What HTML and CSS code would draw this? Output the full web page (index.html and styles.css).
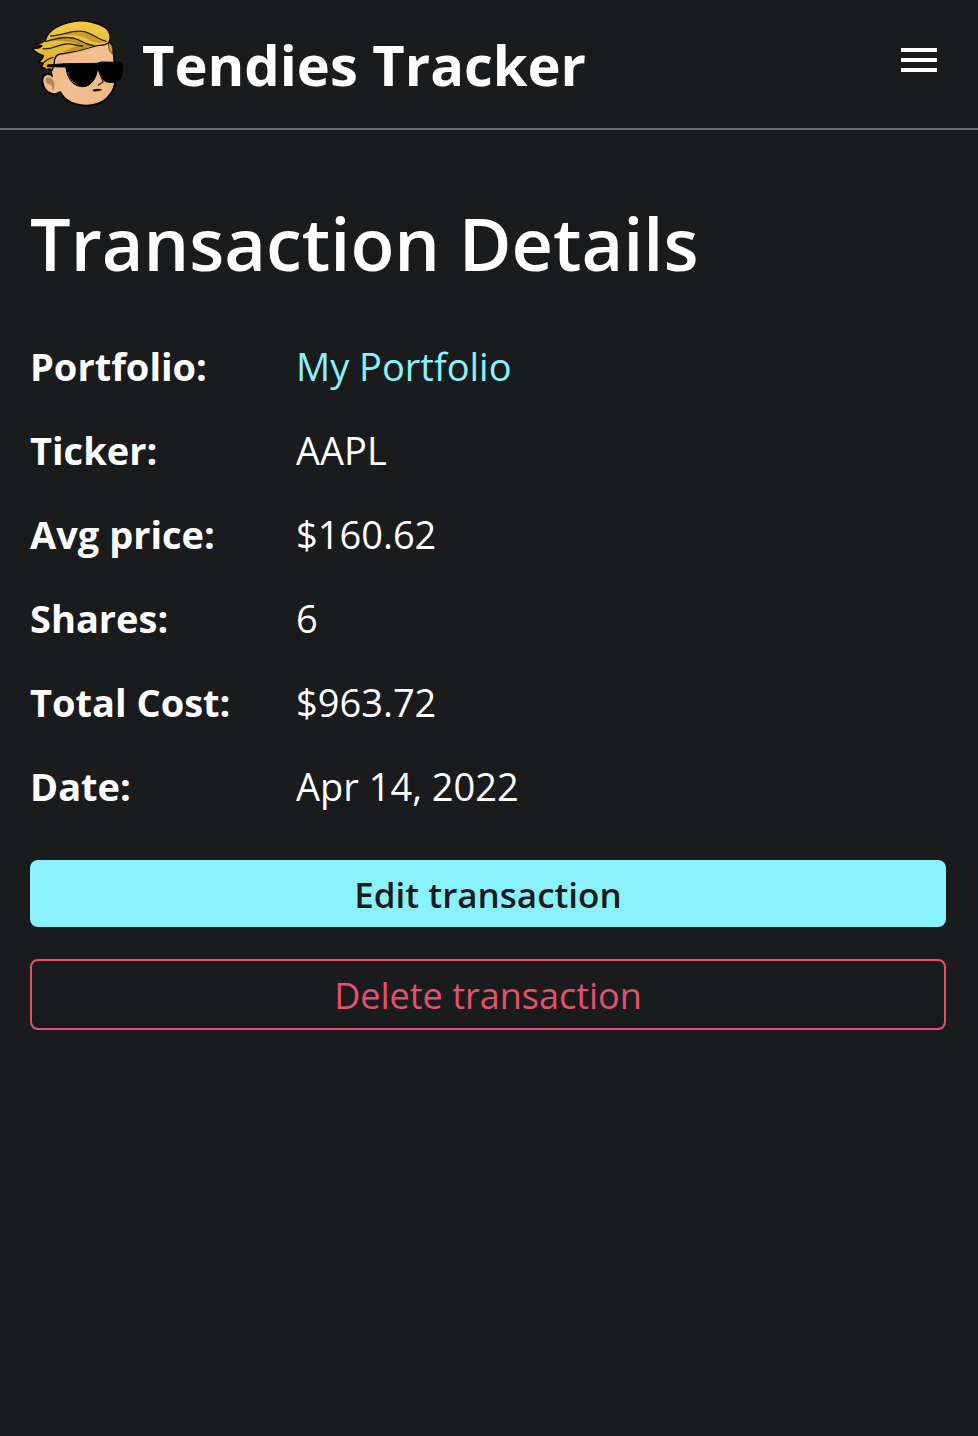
FILE: index.html
```html
<!DOCTYPE html>
<html lang="en">
<head>
<meta charset="utf-8">
<meta name="viewport" content="width=device-width, initial-scale=1">
<title>Tendies Tracker</title>
<link rel="stylesheet" href="styles.css">
</head>
<body>
<header class="header">
  <a class="brand" href="#">
    <svg class="brand-logo" viewBox="30 18 288 288" aria-hidden="true">
      <defs>
        <linearGradient id="skin" x1="0" y1="0" x2="1" y2="1">
          <stop offset="0" stop-color="#e9ae7c"/>
          <stop offset="0.5" stop-color="#f5c090"/>
          <stop offset="1" stop-color="#efb383"/>
        </linearGradient>
        <linearGradient id="hair" x1="0" y1="0" x2="0" y2="1">
          <stop offset="0" stop-color="#f0cb46"/>
          <stop offset="1" stop-color="#dcae2c"/>
        </linearGradient>
      </defs>
      <path d="M98 132 C100 118 130 108 180 110 L255 96 L272 98 C280 120 284 135 283 160 L286 208 C286 232 276 250 262 264 C240 286 200 292 168 283 C146 277 130 264 120 246 C104 258 84 252 74 236 C62 214 66 194 82 192 C90 191 96 195 99 199 Z" fill="url(#skin)" stroke="#080605" stroke-width="6" stroke-linejoin="round"/>
      <path d="M77 204 C86 198 98 204 102 216 C105 228 103 240 97 243 C98 233 96 226 88 222 C80 222 75 214 77 204Z" fill="#b98560"/>
      <path d="M103 140 L103 174 C116 180 122 202 119 246 C110 222 94 205 96 174Z" fill="#f2ba8c"/>
      <path d="M264 96 C276 102 281 116 277 132 L268 122Z" fill="#c79d2c" stroke="#3a2b0c" stroke-width="2"/>
      <path d="M103 158 L97 180 C90 174 86 176 76 179 C76 173 72 171 64 176 C65 168 68 164 70 160 L56 156 C63 151 69 145 70 137 C57 133 43 126 36 112 C46 117 56 116 66 108 L45 101 C60 101 69 99 76 91 C84 62 118 42 164 34 C195 30 232 37 256 53 C272 64 274 84 266 98 C256 107 237 105 222 109 C190 118 164 128 121 132 C108 134 103 142 103 158Z" fill="url(#hair)" stroke="#090806" stroke-width="4" stroke-linejoin="round"/>
      <path d="M80 92 C118 70 158 82 184 98 C196 105 210 108 222 107 C190 119 164 124 128 127 C152 112 172 108 182 107 C158 92 128 92 80 92Z" fill="#bd9326"/>
      <path d="M96 78 C130 70 158 60 188 64 C216 70 232 88 260 94 C242 102 220 98 204 88 C180 72 142 74 96 78Z" fill="#c79c2b"/>
      <path d="M92 78 C125 77 155 60 188 64 C216 68 232 88 258 94 M76 95 C112 84 146 76 172 88 C190 97 202 106 220 106 M69 116 C94 120 112 104 138 102 C160 100 170 108 188 108 M70 158 C80 149 88 145 99 142" fill="none" stroke="#30230a" stroke-width="4" stroke-linecap="round"/>
      <path d="M82 165 L136 161 L232 160 L242 156 L306 157 C309 174 309 195 299 209 C286 220 263 220 251 211 C243 204 239 193 235 180 L232 179 C230 201 216 223 200 228 C184 234 160 226 150 209 C141 194 140 184 137 171 L82 170Z" fill="#020202" stroke="#020202" stroke-width="3" stroke-linejoin="round"/>
      <path d="M144 187 C148 206 159 219 174 225" fill="none" stroke="#817b70" stroke-width="4" stroke-dasharray="3 4"/>
      <path d="M238 184 L249 216 L234 226" fill="none" stroke="#4a2b1b" stroke-width="4"/>
      <path d="M217 240 Q229 233 246 238 Q244 245 220 244Z" fill="#241610"/>
    </svg>
    <span class="brand-name">Tendies Tracker</span>
  </a>
  <button class="menu-button" type="button" aria-label="Open menu">
    <svg class="menu-icon" viewBox="0 0 36 24" aria-hidden="true"><path d="M0 0h36v4H0zM0 10h36v4H0zM0 20h36v4H0z" fill="currentColor"/></svg>
  </button>
</header>
<main class="main">
  <h1 class="title">Transaction Details</h1>
  <dl class="details">
    <dt class="label">Portfolio:</dt><dd class="value"><a class="link" href="#">My Portfolio</a></dd>
    <dt class="label">Ticker:</dt><dd class="value">AAPL</dd>
    <dt class="label">Avg price:</dt><dd class="value">$160.62</dd>
    <dt class="label">Shares:</dt><dd class="value">6</dd>
    <dt class="label">Total Cost:</dt><dd class="value">$963.72</dd>
    <dt class="label">Date:</dt><dd class="value">Apr 14, 2022</dd>
  </dl>
  <div class="actions">
    <button class="button button-primary" type="button">Edit transaction</button>
    <button class="button button-danger" type="button">Delete transaction</button>
  </div>
</main>
</body>
</html>
```
FILE: styles.css
```css
* { box-sizing: border-box; }

body {
  margin: 0;
  background: #1a1b1d;
  color: #fff;
  font-family: "Open Sans", "Noto Sans", sans-serif;
  font-size: 38px;
  line-height: 54px;
}

.header {
  display: flex;
  justify-content: space-between;
  align-items: center;
  padding: 16px 30px;
  border-bottom: 2px solid #6b6b6b;
}

.brand {
  display: flex;
  align-items: center;
  gap: 16px;
  color: inherit;
  text-decoration: none;
}

.brand-logo { width: 96px; height: 96px; }

.brand-name {
  font-size: 56px;
  font-weight: 700;
  line-height: 80px;
}

.menu-button {
  display: flex;
  padding: 10px 10px 18px;
  border: 0;
  background: none;
  color: #fff;
  cursor: pointer;
}

.menu-icon { width: 38px; height: 24px; }

.main { padding: 64px 32px 64px 30px; }

.title {
  margin: 0 0 47px;
  font-size: 72px;
  font-weight: 600;
  line-height: 98px;
}

.details {
  display: grid;
  grid-template-columns: 266px 1fr;
  row-gap: 30px;
  margin: 0 0 47px;
}

.label { font-weight: 700; }

.value { margin: 0; }

.link { color: #8af2fd; text-decoration: none; }

.actions { display: grid; gap: 32px; }

.button {
  padding: 9px 16px 7px;
  border: 0;
  border-radius: 8px;
  font: 500 36px/51px "Open Sans", "Noto Sans", sans-serif;
  cursor: pointer;
}

.button-primary {
  background: #8af2fd;
  color: #1a1b1d;
  font-size: 35px;
  font-weight: 600;
}

.button-danger {
  border: 2px solid #e5516c;
  background: none;
  color: #e5516c;
}
```
